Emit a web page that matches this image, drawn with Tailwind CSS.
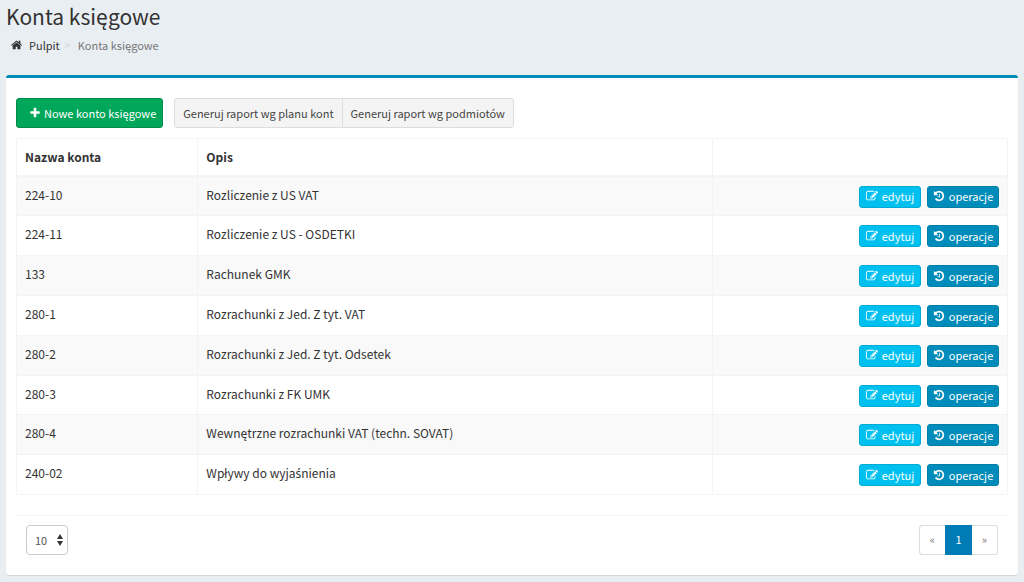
<!DOCTYPE html>
<html lang="pl">
<head>
<meta charset="utf-8">
<title>Konta księgowe</title>
<script src="https://cdn.jsdelivr.net/npm/@tailwindcss/browser@4"></script>
</head>
<body class="bg-[#e9eef3] min-h-screen px-[6px] pb-[6px] font-['Source_Sans_Pro','Noto_Sans_CJK_SC','Noto_Sans',sans-serif] text-[12px] leading-5 text-[#333]">
<svg class="hidden" aria-hidden="true">
  <symbol id="home" viewBox="0 0 1792 1792"><path d="M1408 992v480q0 26-19 45t-45 19h-384v-384h-256v384h-384q-26 0-45-19t-19-45v-480q0-1 .5-3t.5-3l575-474 575 474q1 2 1 6zm223-69l-62 74q-8 9-21 11h-3q-13 0-21-7l-692-577-692 577q-12 8-24 7-13-2-21-11l-62-74q-8-10-7-23.500t11-21.500l719-599q32-26 76-26t76 26l244 204v-195q0-14 9-23t23-9h192q14 0 23 9t9 23v408l219 182q10 8 11 21.500t-7 23.500z"/></symbol>
  <symbol id="plus" viewBox="0 0 1792 1792"><path d="M1600 736v192q0 40-28 68t-68 28h-416v416q0 40-28 68t-68 28h-192q-40 0-68-28t-28-68v-416h-416q-40 0-68-28t-28-68v-192q0-40 28-68t68-28h416v-416q0-40 28-68t68-28h192q40 0 68 28t28 68v416h416q40 0 68 28t28 68z"/></symbol>
  <symbol id="edit" viewBox="0 0 1792 1792"><path d="M888 1184l116-116-152-152-116 116v56h96v96h56zm440-720q-16-16-33 1l-350 350q-17 17-1 33t33-1l350-350q17-17 1-33zm80 594v190q0 119-84.500 203.500t-203.500 84.500h-832q-119 0-203.500-84.500t-84.500-203.500v-832q0-119 84.500-203.500t203.500-84.500h832q63 0 117 25 15 7 18 23 3 17-9 29l-49 49q-14 14-32 8-23-6-45-6h-832q-66 0-113 47t-47 113v832q0 66 47 113t113 47h832q66 0 113-47t47-113v-126q0-13 9-22l64-64q15-15 35-7t20 29zm-96-738l288 288-672 672h-288v-288zm444 132l-92 92-288-288 92-92q28-28 68-28t68 28l152 152q28 28 28 68t-28 68z"/></symbol>
  <symbol id="history" viewBox="0 0 1792 1792"><path d="M1664 896q0 156-61 298t-164 245-245 164-298 61q-172 0-327-72.500t-264-204.500q-7-10-6.500-22.500t8.500-20.500l137-138q10-9 25-9 16 2 23 12 73 95 179 147t225 52q104 0 198.500-40.500t163.500-109.500 109.500-163.500 40.500-198.500-40.500-198.500-109.500-163.500-163.500-109.500-198.500-40.500q-98 0-188 35.500t-160 101.500l137 138q31 30 14 69-17 40-59 40h-448q-26 0-45-19t-19-45v-448q0-42 40-59 39-17 69 14l130 129q107-101 244.500-156.500t284.500-55.500q156 0 298 61t245 164 164 245 61 298zm-640-288v448q0 14-9 23t-23 9h-320q-14 0-23-9t-9-23v-64q0-14 9-23t23-9h224v-352q0-14 9-23t23-9h64q14 0 23 9t9 23z"/></symbol>
</svg>

<header class="h-[75px]">
  <h1 class="text-[21px] leading-8">Konta księgowe</h1>
  <nav aria-label="Okruszki" class="flex items-center pl-[5px] pt-[3px] text-[11px]">
    <a href="#" class="flex items-center"><svg class="mr-[6px] size-3 fill-current"><use href="#home"/></svg>Pulpit</a>
    <span class="w-[18px] pl-[5px] text-[10px] text-[#ccc]">&gt;</span>
    <span class="text-[#777]">Konta księgowe</span>
  </nav>
</header>

<main class="rounded-[3px] border-t-[3px] border-[#008cb4] bg-white px-[10px] pb-5 pt-5 shadow-[0_1px_1px_rgba(0,0,0,0.1)]">
  <div class="flex gap-[11px] text-[11px]">
    <button type="button" class="flex h-[30px] items-center rounded-[3px] border border-[#008d4c] bg-[#00a65a] pb-px pl-3 pr-[6px] text-white"><svg class="mr-[3px] size-3 fill-current"><use href="#plus"/></svg>Nowe konto księgowe</button>
    <div class="flex text-[#444]">
      <button type="button" class="h-[30px] rounded-l-[3px] border border-[#ddd] bg-[#f4f4f4] px-2 pb-px">Generuj raport wg planu kont</button>
      <button type="button" class="-ml-px h-[30px] rounded-r-[3px] border border-[#ddd] bg-[#f4f4f4] px-2 pb-px">Generuj raport wg podmiotów</button>
    </div>
  </div>

  <table class="mt-[10px] h-[357px] w-full table-fixed border-collapse border border-[#f4f4f4]">
    <thead>
      <tr class="h-[37px] text-left">
        <th class="w-[18.3%] border border-b-2 border-[#f4f4f4] px-2 font-bold">Nazwa konta</th>
        <th class="w-[51.9%] border border-b-2 border-[#f4f4f4] px-2 font-bold">Opis</th>
        <th class="border border-b-2 border-[#f4f4f4] px-2"></th>
      </tr>
    </thead>
    <tbody id="accounts"></tbody>
  </table>

  <div class="mt-5 flex items-start justify-between border-t border-[#f4f4f4] px-[10px] pt-[9px] text-[11px]">
    <div class="relative">
      <select aria-label="Liczba wierszy" class="h-[30px] w-[42px] appearance-none rounded-[4px] border border-[#ccc] bg-white pb-px pl-2 text-[#555]"><option>10</option><option>25</option><option>50</option></select>
      <svg class="pointer-events-none absolute right-[5px] top-[9px] h-3 w-[6px] fill-[#333]" viewBox="0 0 6 12"><path d="M3 0L6 5H0zM3 12L0 7H6z"/></svg>
    </div>
    <nav aria-label="Strony" class="flex h-[30px] text-center leading-[27px]">
      <a href="#" class="w-[26px] rounded-l-[3px] border border-r-0 border-[#ddd] text-[#777]">«</a>
      <a href="#" aria-current="page" class="w-[27px] border border-[#007bb6] bg-[#007bb6] text-white">1</a>
      <a href="#" class="w-[26px] rounded-r-[3px] border border-l-0 border-[#ddd] text-[#777]">»</a>
    </nav>
  </div>
</main>

<script>
const accounts = [
  ['224-10', 'Rozliczenie z US VAT'],
  ['224-11', 'Rozliczenie z US - OSDETKI'],
  ['133', 'Rachunek GMK'],
  ['280-1', 'Rozrachunki z Jed. Z tyt. VAT'],
  ['280-2', 'Rozrachunki z Jed. Z tyt. Odsetek'],
  ['280-3', 'Rozrachunki z FK UMK'],
  ['280-4', 'Wewnętrzne rozrachunki VAT (techn. SOVAT)'],
  ['240-02', `Wpływy do wyja<span class="font-['Noto_Sans',sans-serif]">ś</span>nienia`],
];
document.getElementById('accounts').innerHTML = accounts.map(([code, name]) => `
  <tr class="odd:bg-[#f9f9f9] align-top">
    <td class="border border-[#f4f4f4] px-2 pt-2">${code}</td>
    <td class="border border-[#f4f4f4] px-2 pt-2">${name}</td>
    <td class="border border-[#f4f4f4] px-2 pt-[9px]">
      <div class="flex justify-end gap-[6px] text-[11px] text-white">
        <a href="#" class="flex h-[22px] w-[62px] items-center justify-center gap-1 rounded-[3px] border border-[#00acd6] bg-[#00c0ef] pb-px"><svg class="size-3 fill-current"><use href="#edit"/></svg>edytuj</a>
        <a href="#" class="flex h-[22px] w-[72px] items-center justify-center gap-1 rounded-[3px] border border-[#007fa6] bg-[#008cba] pb-px"><svg class="size-3 fill-current"><use href="#history"/></svg>operacje</a>
      </div>
    </td>
  </tr>`).join('');
</script>
</body>
</html>
